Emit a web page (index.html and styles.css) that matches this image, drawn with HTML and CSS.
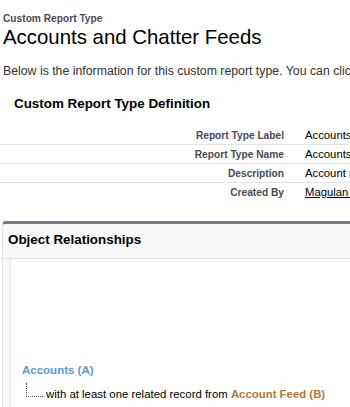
FILE: index.html
```html
<!DOCTYPE html>
<html>
<head>
  <meta charset="utf-8">
  <title>Custom Report Type</title>
  <link rel="stylesheet" href="styles.css">
</head>
<body>
  <div class="page-title">
    <div class="page-type">Custom Report Type</div>
    <h1>Accounts and Chatter Feeds</h1>
  </div>
  <p class="intro">Below is the information for this custom report type. You can click Edit to modify it.</p>

  <div class="section">
    <h2>Custom Report Type Definition</h2>
    <table class="detail">
      <tr><td class="label">Report Type Label</td><td class="value">Accounts and Chatter Feeds</td></tr>
      <tr><td class="label">Report Type Name</td><td class="value">Accounts_and_Chatter_Feeds</td></tr>
      <tr><td class="label">Description</td><td class="value">Account records with Chatter feed</td></tr>
      <tr class="last"><td class="label">Created By</td><td class="value"><a href="#">Magulan D</a></td></tr>
    </table>
  </div>

  <div class="block">
    <div class="block-head">Object Relationships</div>
    <div class="block-body">
      <div class="rel">
        <div class="obj-a">Accounts (A)</div>
        <div class="child">
          <span class="tree"></span>
          <span>with at least one related record from <b class="obj-b">Account Feed (B)</b></span>
        </div>
      </div>
    </div>
  </div>
</body>
</html>
```

FILE: styles.css
```css
body {
  margin: 0;
  background: #fff;
  font-family: "Liberation Sans", Arial, sans-serif;
  color: #000;
  overflow: hidden;
  white-space: nowrap;
}
.page-title {
  padding: 13px 0 0 3px;
}
.page-type {
  font-size: 10.2px;
  font-weight: bold;
  color: #4a4a56;
  line-height: 12px;
}
h1 {
  margin: 0;
  font-size: 20.4px;
  font-weight: normal;
  line-height: 24px;
  color: #000;
}
.intro {
  margin: 15px 0 0 3px;
  font-size: 12.3px;
  line-height: 14px;
  color: #333;
}
.section h2 {
  margin: 18px 0 0 14px;
  font-size: 13.4px;
  line-height: 16px;
  color: #000;
}
.detail {
  margin-top: 14px;
  width: 500px;
  border-collapse: collapse;
  font-size: 11.3px;
}
.detail td {
  height: 18px;
  padding: 0;
  border-bottom: 1px solid #e3e3e7;
}
.detail tr.last td {
  border-bottom: none;
}
.label {
  width: 284px;
  text-align: right;
  font-weight: bold;
  color: #4a4a56;
  font-size: 10.2px;
}
.value {
  padding-left: 21px !important;
  color: #000;
}
.value a {
  color: #000;
}
.block {
  margin: 20px 0 0 2px;
  border-top: 3px solid #747a8c;
  border-left: 1px solid #e0e3e5;
  border-radius: 4px 0 0 0;
  background: #f8f8f8;
  height: 200px;
}
.block-head {
  height: 34px;
  line-height: 32px;
  padding-left: 5px;
  font-size: 13.4px;
  font-weight: bold;
  color: #000;
  border-bottom: 1px solid #e0e0e0;
}
.block-body {
  margin-left: 7px;
  background: #fff;
  border-left: 1px solid #e6e6e6;
  height: 200px;
  padding: 104px 0 0 11px;
}
.obj-a {
  font-size: 11.5px;
  font-weight: bold;
  color: #5a9bd5;
  line-height: 14px;
}
.child {
  display: flex;
  align-items: flex-end;
  margin-top: 6px;
  font-size: 11.4px;
  line-height: 14px;
}
.tree {
  width: 16px;
  height: 13px;
  margin: 0 3px 4px 4px;
  border-left: 1px dotted #555;
  border-bottom: 1px dotted #555;
}
.obj-b {
  color: #b07a32;
}
```
